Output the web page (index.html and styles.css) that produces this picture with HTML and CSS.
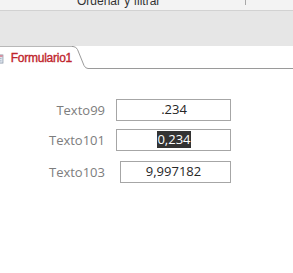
FILE: index.html
```html
<!DOCTYPE html>
<html lang="es">
<head>
    <meta charset="UTF-8">
    <meta name="viewport" content="width=device-width, initial-scale=1.0">
    <title>Formulario1</title>
    <link rel="stylesheet" href="styles.css">
</head>
<body>
    <!-- Pie del grupo de la cinta -->
    <div class="ribbon-label">
        <span class="group-name">Ordenar y filtrar</span>
        <span class="divider"></span>
    </div>
    <div class="ribbon-gap"></div>

    <!-- Pestaña del formulario -->
    <div class="tabs">
        <div class="tab">
            <svg class="tab-icon" width="5" height="12" viewBox="0 0 5 12">
                <rect x="-8" y="0.5" width="12" height="11" fill="#dfe6ef" stroke="#8a96a6"/>
                <rect x="-7.5" y="1" width="11" height="2" fill="#d87a8c"/>
                <rect x="-6" y="5" width="8" height="1" fill="#9aa8bb"/>
                <rect x="-6" y="8" width="8" height="1" fill="#9aa8bb"/>
            </svg>
            <span class="tab-title">Formulario1</span>
        </div>
        <svg class="tab-edge" width="17" height="23" viewBox="0 0 17 23">
            <path d="M0 0.5 H1 Q4 0.5 5.5 3.5 L12 19.5 Q13.5 22.5 16 22.5 H17" fill="#fff" stroke="#9a9a9a"/>
        </svg>
        <div class="tab-rest"></div>
    </div>

    <!-- Campos -->
    <div class="form">
        <div class="row">
            <label class="field-label">Texto99</label>
            <div class="field">.234</div>
        </div>
        <div class="row row-mid">
            <label class="field-label">Texto101</label>
            <div class="field"><span class="selected">0,234</span></div>
        </div>
        <div class="row row-last">
            <label class="field-label">Texto103</label>
            <div class="field field-narrow">9,997182</div>
        </div>
    </div>
</body>
</html>
```

FILE: styles.css
```css
body {
    margin: 0;
    padding: 0;
    background-color: #fff;
    font-family: "Open Sans", Arial, sans-serif;
    width: 293px;
    height: 273px;
    overflow: hidden;
}

.ribbon-label {
    display: flex;
    height: 10px;
    background-color: #f3f3f3;
    border-bottom: 1px solid #d2d2d2;
    overflow: hidden;
}

.group-name {
    font-family: "Liberation Sans", Arial, sans-serif;
    font-size: 12px;
    line-height: 14px;
    color: #333;
    margin-top: -6px;
    margin-left: 77px;
    width: 168px;
}

.divider {
    width: 1px;
    height: 5px;
    background-color: #a8a8a8;
}

.ribbon-gap {
    height: 35px;
    background-color: #e6e6e6;
}

.tabs {
    display: flex;
    height: 23px;
}

.tab {
    display: flex;
    align-items: center;
    width: 72px;
    height: 22px;
    border-top: 1px solid #b8b8b8;
}

.tab-icon {
    display: block;
    margin-top: 1px;
}

.tab-title {
    font-family: "Liberation Sans", Arial, sans-serif;
    font-size: 12px;
    letter-spacing: -0.25px;
    color: #c0242c;
    margin-left: 7px;
    -webkit-text-stroke: 0.35px #c0242c;
}

.tab-edge {
    display: block;
}

.tab-rest {
    flex: 1;
    border-bottom: 1px solid #9a9a9a;
}

.form {
    padding-top: 30px;
}

.row {
    display: flex;
    align-items: center;
}

.row-mid {
    margin-top: 8px;
}

.row-last {
    margin-top: 10px;
}

.field-label {
    width: 105px;
    text-align: right;
    font-size: 13px;
    color: #7d7d7d;
}

.field {
    box-sizing: border-box;
    width: 115px;
    height: 22px;
    margin-left: 11px;
    border: 1px solid #a6a6a6;
    font-size: 13px;
    line-height: 19px;
    color: #262626;
    text-align: center;
    padding-left: 1px;
}

.field-narrow {
    width: 111px;
    margin-left: 15px;
    padding-left: 0;
    padding-right: 4px;
}

.selected {
    display: inline-block;
    background-color: #333;
    color: #fff;
    line-height: 17px;
}
```
